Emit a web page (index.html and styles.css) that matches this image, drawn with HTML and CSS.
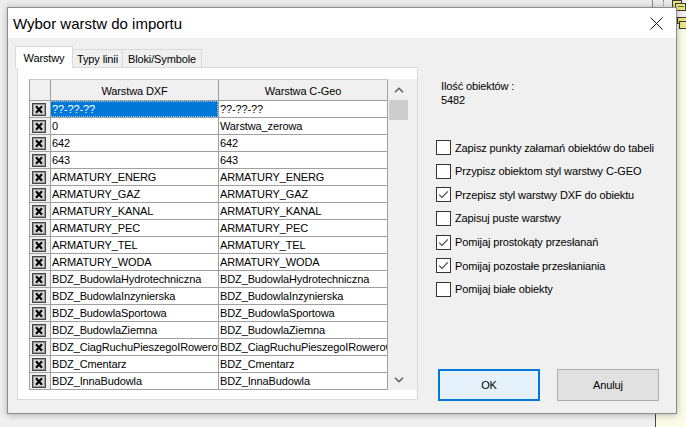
FILE: index.html
```html
<!DOCTYPE html>
<html lang="pl">
<head>
<meta charset="utf-8">
<title>Wybor warstw do importu</title>
<link rel="stylesheet" href="styles.css">
</head>
<body>
<svg class="defs" width="0" height="0" aria-hidden="true">
  <defs>
    <symbol id="xbox" viewBox="0 0 14 13">
      <rect x="0.5" y="0.5" width="13" height="12" fill="#d6d6d6" stroke="#454545"/>
      <rect x="1.5" y="1.5" width="11" height="10" fill="none" stroke="#9a9a9a"/>
      <path d="M4 3.3 L10 9.7 M10 3.3 L4 9.7" stroke="#000" stroke-width="2.1" fill="none"/>
    </symbol>
    <symbol id="check" viewBox="0 0 15 15">
      <path d="M3.2 7.6 L6 10.4 L11.8 4.4" stroke="#4a4a4a" stroke-width="1.2" fill="none"/>
    </symbol>
  </defs>
</svg>

<div class="topstrip">
  <div class="vline"></div>
  <div class="dotline"></div>
</div>
<div class="bgwin"></div>
<svg class="icon1" width="14" height="11" viewBox="0 0 14 11"><rect x="0.5" y="0.5" width="9" height="7" fill="#e9e27a" stroke="#3a3a3a"/><rect x="3.5" y="3.5" width="10" height="7" fill="#ece680" stroke="#3a3a3a"/><path d="M6 6.5 H12" stroke="#6a6a2a"/></svg>
<svg class="icon2" width="10" height="12" viewBox="0 0 10 12"><rect x="0.5" y="0.5" width="9" height="6" fill="#e9e27a" stroke="#3a3a3a"/><rect x="2.5" y="4.5" width="8" height="7" fill="#ece680" stroke="#3a3a3a"/></svg>

<div class="dialog">
  <div class="titlebar">
    <span class="title">Wybor warstw do importu</span>
    <svg class="close" width="13" height="13" viewBox="0 0 13 13"><path d="M0.5 0.5 L12.5 12.5 M12.5 0.5 L0.5 12.5" stroke="#111" stroke-width="1"/></svg>
  </div>
  <div class="body">
    <div class="leftcol">
      <div class="tabs">
        <div class="tab active">Warstwy</div>
        <div class="tab t2">Typy linii</div>
        <div class="tab t3">Bloki/Symbole</div>
      </div>
      <div class="panel">
        <div class="grid">
          <div class="table">
            <div class="hcell"></div>
            <div class="hcell">Warstwa DXF</div>
            <div class="hcell">Warstwa C-Geo</div>

            <div class="icell"><svg class="xb"><use href="#xbox"/></svg></div>
            <div class="cell sel"><span class="focus">??-??-??</span></div>
            <div class="cell">??-??-??</div>

            <div class="icell"><svg class="xb"><use href="#xbox"/></svg></div>
            <div class="cell">0</div>
            <div class="cell">Warstwa_zerowa</div>

            <div class="icell"><svg class="xb"><use href="#xbox"/></svg></div>
            <div class="cell">642</div>
            <div class="cell">642</div>

            <div class="icell"><svg class="xb"><use href="#xbox"/></svg></div>
            <div class="cell">643</div>
            <div class="cell">643</div>

            <div class="icell"><svg class="xb"><use href="#xbox"/></svg></div>
            <div class="cell">ARMATURY_ENERG</div>
            <div class="cell">ARMATURY_ENERG</div>

            <div class="icell"><svg class="xb"><use href="#xbox"/></svg></div>
            <div class="cell">ARMATURY_GAZ</div>
            <div class="cell">ARMATURY_GAZ</div>

            <div class="icell"><svg class="xb"><use href="#xbox"/></svg></div>
            <div class="cell">ARMATURY_KANAL</div>
            <div class="cell">ARMATURY_KANAL</div>

            <div class="icell"><svg class="xb"><use href="#xbox"/></svg></div>
            <div class="cell">ARMATURY_PEC</div>
            <div class="cell">ARMATURY_PEC</div>

            <div class="icell"><svg class="xb"><use href="#xbox"/></svg></div>
            <div class="cell">ARMATURY_TEL</div>
            <div class="cell">ARMATURY_TEL</div>

            <div class="icell"><svg class="xb"><use href="#xbox"/></svg></div>
            <div class="cell">ARMATURY_WODA</div>
            <div class="cell">ARMATURY_WODA</div>

            <div class="icell"><svg class="xb"><use href="#xbox"/></svg></div>
            <div class="cell">BDZ_BudowlaHydrotechniczna</div>
            <div class="cell">BDZ_BudowlaHydrotechniczna</div>

            <div class="icell"><svg class="xb"><use href="#xbox"/></svg></div>
            <div class="cell">BDZ_BudowlaInzynierska</div>
            <div class="cell">BDZ_BudowlaInzynierska</div>

            <div class="icell"><svg class="xb"><use href="#xbox"/></svg></div>
            <div class="cell">BDZ_BudowlaSportowa</div>
            <div class="cell">BDZ_BudowlaSportowa</div>

            <div class="icell"><svg class="xb"><use href="#xbox"/></svg></div>
            <div class="cell">BDZ_BudowlaZiemna</div>
            <div class="cell">BDZ_BudowlaZiemna</div>

            <div class="icell"><svg class="xb"><use href="#xbox"/></svg></div>
            <div class="cell">BDZ_CiagRuchuPieszegoIRowerowego</div>
            <div class="cell">BDZ_CiagRuchuPieszegoIRowerowego</div>

            <div class="icell"><svg class="xb"><use href="#xbox"/></svg></div>
            <div class="cell">BDZ_Cmentarz</div>
            <div class="cell">BDZ_Cmentarz</div>

            <div class="icell"><svg class="xb"><use href="#xbox"/></svg></div>
            <div class="cell">BDZ_InnaBudowla</div>
            <div class="cell">BDZ_InnaBudowla</div>
          </div>
          <div class="vscroll">
            <div class="sbtn"><svg width="10" height="6" viewBox="0 0 10 6"><path d="M1 5.3 L5 1.3 L9 5.3" stroke="#606060" stroke-width="1.6" fill="none"/></svg></div>
            <div class="thumb"></div>
            <div class="track"></div>
            <div class="sbtn"><svg width="10" height="6" viewBox="0 0 10 6"><path d="M1 0.7 L5 4.7 L9 0.7" stroke="#606060" stroke-width="1.6" fill="none"/></svg></div>
          </div>
        </div>
      </div>
    </div>

    <div class="rightcol">
      <div class="count">Ilość obiektów :<br>5482</div>
      <div class="opts">
        <div class="opt"><span class="box"></span><span>Zapisz punkty załamań obiektów do tabeli</span></div>
        <div class="opt"><span class="box"></span><span>Przypisz obiektom styl warstwy C-GEO</span></div>
        <div class="opt"><span class="box"><svg class="ck"><use href="#check"/></svg></span><span>Przepisz styl warstwy DXF do obiektu</span></div>
        <div class="opt"><span class="box"></span><span>Zapisuj puste warstwy</span></div>
        <div class="opt"><span class="box"><svg class="ck"><use href="#check"/></svg></span><span>Pomijaj prostokąty przesłanań</span></div>
        <div class="opt"><span class="box"><svg class="ck"><use href="#check"/></svg></span><span>Pomijaj pozostałe przesłaniania</span></div>
        <div class="opt"><span class="box"></span><span>Pomijaj białe obiekty</span></div>
      </div>
      <div class="buttons">
        <div class="btn ok">OK</div>
        <div class="btn">Anuluj</div>
      </div>
    </div>
  </div>
</div>
</body>
</html>
```

FILE: styles.css
```css
* { box-sizing: border-box; }
html, body { margin: 0; padding: 0; }
body {
  width: 686px;
  height: 427px;
  overflow: hidden;
  position: relative;
  background: #f0f0f0;
  font-family: "Liberation Sans", Arial, sans-serif;
  font-size: 11px;
  letter-spacing: -0.12px;
  color: #000;
}
.defs { position: absolute; width: 0; height: 0; }

.topstrip {
  position: absolute; left: 0; top: 0; width: 686px; height: 8px;
  background: #ececec;
}
.topstrip .vline { position: absolute; left: 652px; top: 0; width: 1px; height: 8px; background: #8a8a8a; }
.topstrip .dotline { position: absolute; left: 663px; top: 0; width: 1px; height: 8px; border-left: 1px dotted #8a8a8a; }

.bgwin {
  position: absolute; left: 655px; top: 30px; right: 0; bottom: 0;
  background: #fbfbe8;
  border-left: 1px solid #4a4a4a;
}
.icon1 { position: absolute; left: 672px; top: 0; }
.icon2 { position: absolute; left: 677px; top: 17px; }

.dialog {
  position: absolute;
  left: 7px; top: 7px;
  width: 670px; height: 407px;
  border: 1px solid #8c8c8c;
  background: #f0f0f0;
  box-shadow: 0 1px 7px rgba(0,0,0,0.28);
  display: flex;
  flex-direction: column;
}
.titlebar {
  height: 30px;
  flex: none;
  background: #fff;
  display: flex;
  align-items: center;
  justify-content: space-between;
  padding: 0 13px 0 5px;
}
.title { font-size: 15px; letter-spacing: 0; color: #000; }
.close { display: block; margin-top: 1px; }

.body {
  flex: 1;
  display: flex;
  padding: 8px 17px 12px 7px;
}
.leftcol { width: 403px; flex: none; display: flex; flex-direction: column; }

.tabs { display: flex; align-items: flex-end; height: 21px; }
.tab {
  height: 18px;
  background: #f0f0f0;
  border: 1px solid #d9d9d9;
  border-bottom: none;
  display: flex; align-items: center; justify-content: center;
  padding-top: 1px;
  margin-left: -1px;
}
.tab.active {
  height: 22px;
  margin-bottom: -1px;
  width: 58px;
  background: #fff;
  margin-left: 0;
  position: relative;
  z-index: 1;
  padding-top: 0;
}
.tab.t2 { width: 51px; }
.tab.t3 { width: 80px; }

.panel {
  margin-left: 2px;
  width: 401px;
  height: 333px;
  border: 1px solid #d9d9d9;
  background: #fff;
  padding: 11px 0 0 11px;
}
.grid { display: flex; height: 311px; }
.table {
  display: grid;
  grid-template-columns: 21px 168px 169px;
  grid-auto-rows: 17px;
  grid-template-rows: 21px;
  border-left: 1px solid #a0a0a0;
  border-top: 1px solid #c8c8c8;
  width: 359px;
  height: 311px;
  align-content: start;
}
.hcell {
  background: #f0f0f0;
  border-right: 1px solid #a0a0a0;
  border-bottom: 1px solid #a0a0a0;
  display: flex; align-items: center; justify-content: center;
  padding-top: 1px;
}
.icell {
  background: #f0f0f0;
  border-right: 1px solid #a0a0a0;
  border-bottom: 1px solid #a0a0a0;
  display: flex; align-items: center;
  padding-left: 2px;
}
.xb { width: 14px; height: 13px; display: block; }
.cell {
  border-right: 1px solid #a0a0a0;
  border-bottom: 1px solid #a0a0a0;
  white-space: nowrap;
  overflow: hidden;
  line-height: 16px;
  padding-left: 1px;
  background: #fff;
}
.cell.sel { background: #0078d7; color: #fff; padding: 0; }
.focus {
  display: block;
  height: 16px;
  line-height: 14px;
  padding-left: 1px;
  border: 1px dotted #9fcaf0;
  border-left: none;
}

.vscroll {
  width: 29px;
  height: 311px;
  background: #f0f0f0;
  display: flex;
  flex-direction: column;
}
.sbtn {
  height: 21px; width: 21px; flex: none;
  display: flex; align-items: center; justify-content: center;
}
.thumb { height: 20px; width: 19px; margin-left: 1px; background: #cdcdcd; flex: none; }
.track { flex: 1; }

.rightcol {
  flex: 1;
  margin-left: 18px;
  display: flex;
  flex-direction: column;
}
.count { margin-top: 33px; padding-left: 5px; line-height: 14px; }
.opts { margin-top: 33px; display: flex; flex-direction: column; gap: 8.67px; }
.opt { display: flex; align-items: center; height: 15px; }
.box {
  width: 15px; height: 15px; flex: none;
  border: 1px solid #333;
  background: #fff;
  margin-right: 4px;
  position: relative;
}
.ck { position: absolute; left: -1px; top: -1px; width: 15px; height: 15px; }

.buttons { margin-top: auto; display: flex; gap: 17px; padding-left: 2px; }
.btn {
  width: 102px; height: 32px;
  border: 1px solid #adadad;
  background: #e1e1e1;
  display: flex; align-items: center; justify-content: center;
}
.btn.ok { border: 2px solid #0078d7; background: #e5f1fb; }
```
